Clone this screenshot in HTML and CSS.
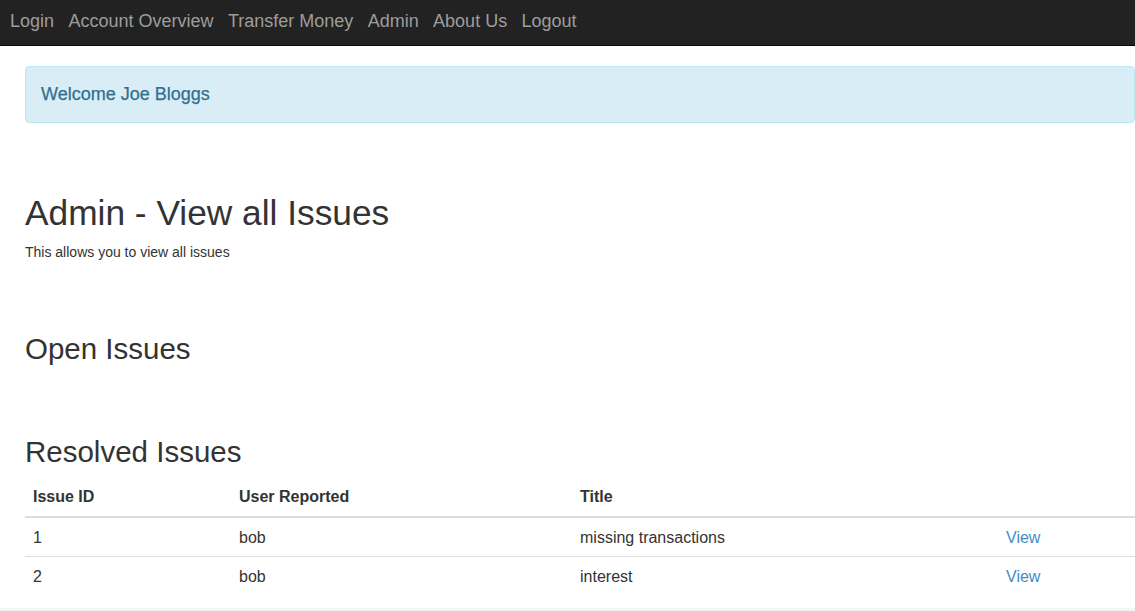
FILE: index.html
```html
<!DOCTYPE html>
<html lang="en">
<head>
<meta charset="utf-8">
<title>Admin - View all Issues</title>
<link rel="stylesheet" href="styles.css">
</head>
<body>
<nav class="navbar">
  <ul class="nav">
    <li><a href="#">Login</a></li>
    <li><a href="#">Account Overview</a></li>
    <li><a href="#">Transfer Money</a></li>
    <li><a href="#">Admin</a></li>
    <li><a href="#">About Us</a></li>
    <li><a href="#">Logout</a></li>
  </ul>
</nav>
<main class="container">
  <div class="alert">Welcome Joe Bloggs</div>
  <h1 class="title">Admin - View all Issues</h1>
  <p class="lead">This allows you to view all issues</p>
  <h2 class="section first">Open Issues</h2>
  <h2 class="section second">Resolved Issues</h2>
  <table class="table">
    <thead>
      <tr>
        <th class="c1">Issue ID</th>
        <th class="c2">User Reported</th>
        <th class="c3">Title</th>
        <th class="c4"></th>
      </tr>
    </thead>
    <tbody>
      <tr>
        <td>1</td>
        <td>bob</td>
        <td>missing transactions</td>
        <td><a href="#">View</a></td>
      </tr>
      <tr>
        <td>2</td>
        <td>bob</td>
        <td>interest</td>
        <td><a href="#">View</a></td>
      </tr>
    </tbody>
  </table>
</main>
<footer class="footer"></footer>
</body>
</html>
```
FILE: styles.css
```css
* { box-sizing: border-box; }
html, body {
  margin: 0;
  padding: 0;
  background: #fff;
}
body {
  font-family: "Liberation Sans", Arial, Helvetica, sans-serif;
  font-size: 14px;
  line-height: 20px;
  color: #333;
  overflow: hidden;
}
.navbar {
  height: 46px;
  background: #222;
  border-bottom: 1px solid #080808;
}
.nav {
  list-style: none;
  margin: 0;
  padding: 0 0 0 10px;
  display: flex;
  gap: 14.4px;
  height: 45px;
  align-items: center;
}
.nav li { display: block; }
.nav a {
  display: block;
  color: #9d9d9d;
  text-decoration: none;
  font-size: 18px;
  line-height: 24px;
  padding-bottom: 3px;
}
.container {
  padding: 0 0 0 25px;
}
.alert {
  margin-top: 20px;
  height: 57px;
  padding: 15px 15px;
  border: 1px solid #bce8f1;
  border-radius: 4px;
  background: #d9edf7;
  color: #31708f;
  font-size: 18px;
  line-height: 25px;
  -webkit-text-stroke: 0.25px #31708f;
}
.title {
  margin: 70px 0 0;
  font-size: 35.3px;
  line-height: 40px;
  font-weight: normal;
  color: #333;
}
.lead {
  margin: 9px 0 0;
  font-size: 14px;
  line-height: 20px;
}
.section {
  font-size: 29.5px;
  line-height: 33px;
  font-weight: normal;
  margin: 0;
  color: #333;
}
.section.first { margin-top: 70px; }
.section.second { margin-top: 70px; }
.table {
  margin-top: 10px;
  width: 1110px;
  border-collapse: collapse;
  border-spacing: 0;
  font-size: 16px;
}
.table th, .table td {
  padding: 8px;
  line-height: 22px;
  text-align: left;
  vertical-align: top;
}
.table td {
  padding-top: 9px;
  padding-bottom: 7px;
  border-top: 1px solid #ddd;
}
.table th {
  font-weight: bold;
  border-bottom: 2px solid #ddd;
}
.table a {
  color: #428bca;
  text-decoration: none;
}
.c1 { width: 206px; }
.c2 { width: 341px; }
.c3 { width: 426px; }
.c4 { width: 137px; }
.footer {
  margin-top: 13px;
  height: 40px;
  background: #f5f5f5;
}
```
